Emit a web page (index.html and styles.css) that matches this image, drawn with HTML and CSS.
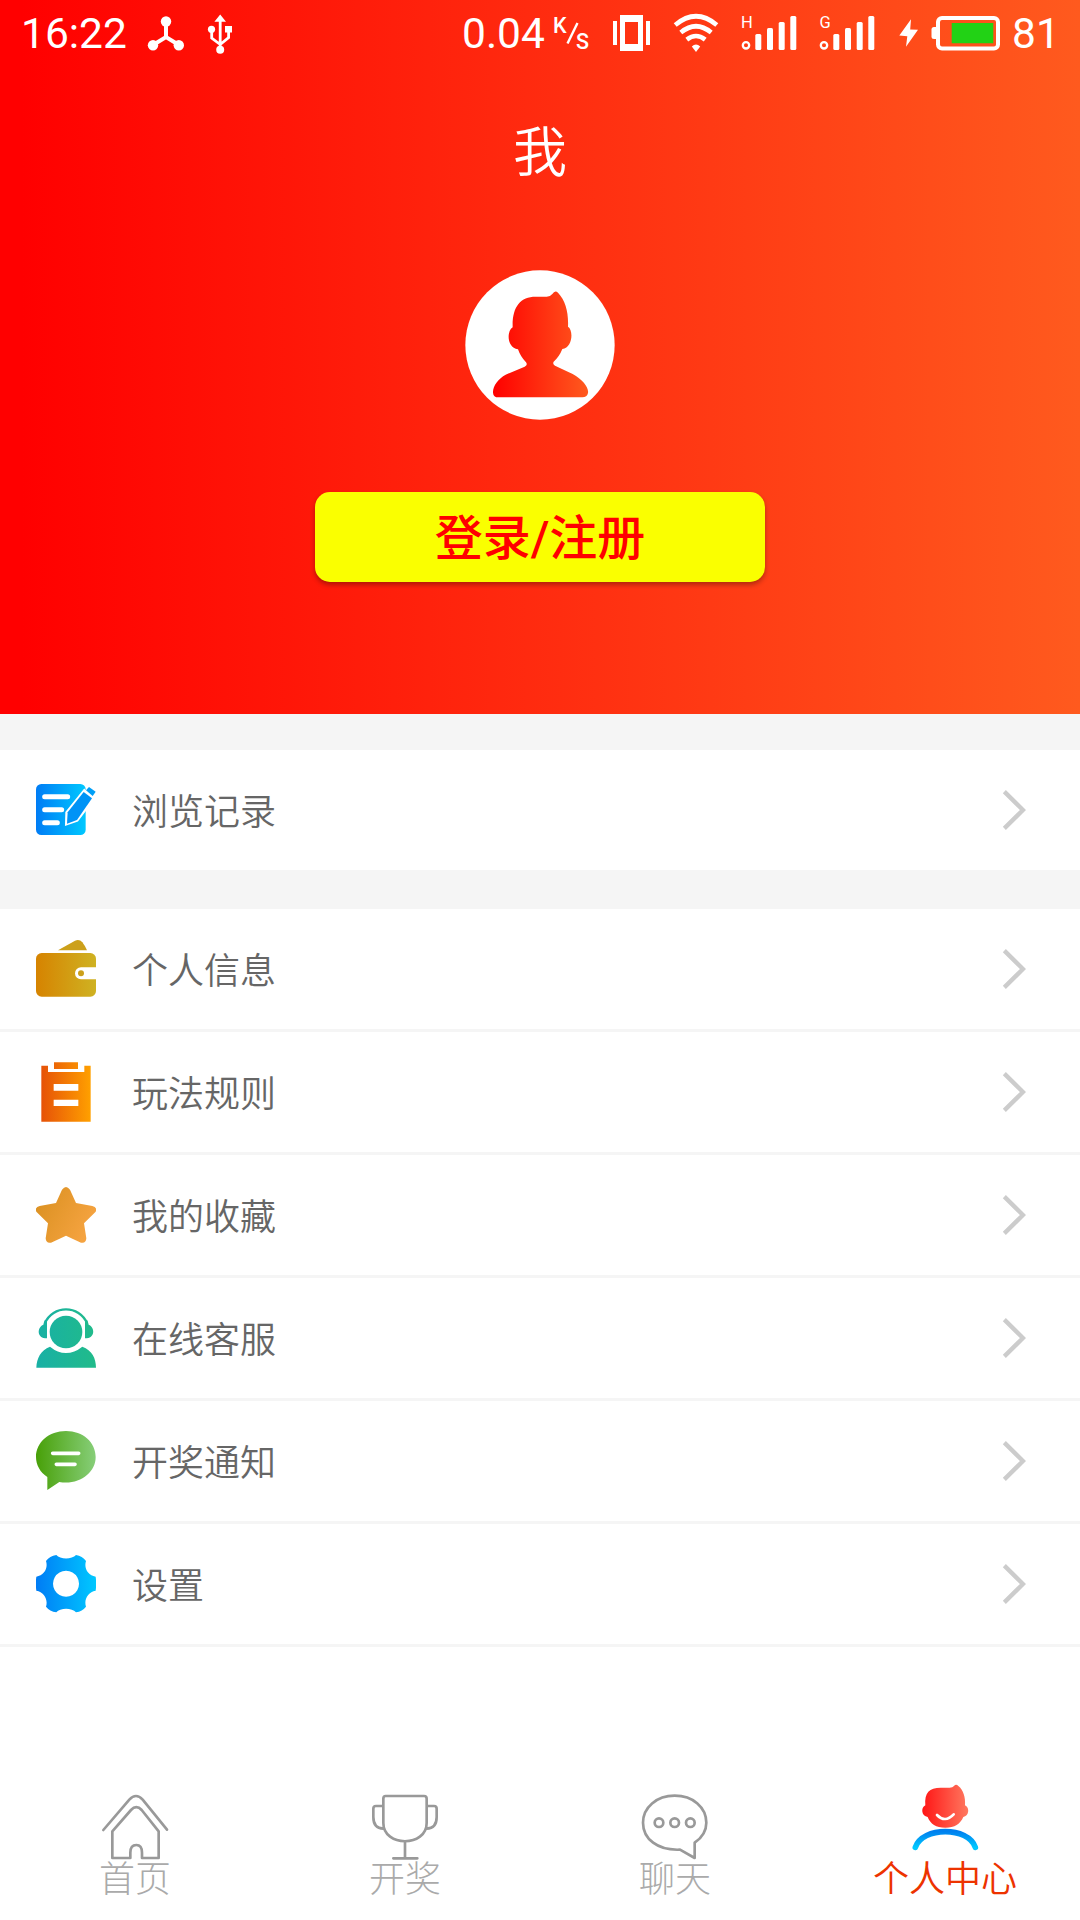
FILE: index.html
```html
<!DOCTYPE html>
<html lang="zh-CN">
<head>
<meta charset="utf-8">
<title>我</title>
<link rel="stylesheet" href="styles.css">
</head>
<body>
<header class="header">
  <div class="status">
    <span class="clock">16:22</span>
    <svg class="status-icon" width="100" height="70" viewBox="140 0 100 70" fill="#fff" stroke="#fff">
      <g stroke="none"><circle cx="166" cy="21.5" r="5.2"/><circle cx="153" cy="45.3" r="5.2"/><circle cx="178.8" cy="45.3" r="5.2"/></g>
      <path d="M166 21v15.500M153 45l13-8 13 8" fill="none" stroke-width="4"/>
      <path d="M220.200 14.500l5.800 7.200h-11.600zM225 26h7v6.500h-7z" stroke="none"/>
      <circle cx="211.500" cy="29.300" r="3.600" stroke="none"/><circle cx="220.200" cy="49.700" r="4" stroke="none"/>
      <path d="M220.200 20v29M211.700 29v9l8.500 6.500M228.600 31v6.500l-8.400 7" fill="none" stroke-width="2.800"/>
    </svg>
    <span class="speed">0.04</span>
    <svg class="status-icon status-right" width="460" height="70" viewBox="550 0 460 70" fill="#fff">
      <text class="unit" x="553" y="32.500">K</text>
      <path d="M577.500 23L567.500 43.500" stroke="#fff" stroke-width="2.400"/>
      <text class="unit" x="576" y="48.500">S</text>
      <path fill-rule="evenodd" d="M620 15h23v36h-23zM625 22v22h13V22zM613 21h4v24h-4zM646 21h4v24h-4z"/>
      <g fill="none" stroke="#fff" stroke-width="4.600">
        <path d="M675.200 25Q696 7.500 716.800 25"/><path d="M680.800 32.500Q696 20 711.200 32.500"/><path d="M686.800 39.600Q696 32.400 705.200 39.600"/>
      </g>
      <path d="M691.800 46.500Q696 42.500 700.200 46.500L696 52z"/>
      <text class="net" x="741" y="28">H</text>
      <circle cx="746" cy="45.300" r="3.200" fill="none" stroke="#fff" stroke-width="2.300"/>
      <rect x="755.300" y="34" width="6" height="16" rx="1.500"/><rect x="767" y="28" width="6" height="22" rx="1.500"/><rect x="778.700" y="22" width="6" height="28" rx="1.500"/><rect x="790.300" y="16" width="6" height="34" rx="1.500"/>
      <text class="net" x="819.500" y="28">G</text>
      <circle cx="824" cy="45.300" r="3.200" fill="none" stroke="#fff" stroke-width="2.300"/>
      <rect x="833.300" y="34" width="6" height="16" rx="1.500"/><rect x="845" y="28" width="6" height="22" rx="1.500"/><rect x="856.700" y="22" width="6" height="28" rx="1.500"/><rect x="868.300" y="16" width="6" height="34" rx="1.500"/>
      <path d="M911 19.300L899.300 35.600l8 .6-1.300 10.600L918 29.700l-7.800-.3z"/>
      <rect x="938" y="18" width="60" height="30.500" rx="4" fill="none" stroke="#fff" stroke-width="4"/>
      <path d="M937 27h-3q-2.500 0-2.500 2.500v7q0 2.500 2.500 2.500h3z"/>
      <path fill="#22d215" d="M951.700 23h41.600v20.300h-41.600z"/>
    </svg>
    <span class="battery">81</span>
  </div>
  <h1 class="title">我</h1>
  <svg class="avatar" viewBox="75 510 450 450">
    <defs><linearGradient id="face"><stop stop-color="#f00"/><stop offset="1" stop-color="#ff5a1e"/></linearGradient></defs>
    <circle cx="300" cy="735" r="224" fill="#fff"/>
    <path fill="url(#face)" d="M218 682C216 622 240 590 287 590H320Q331 590 337 582Q345 569 354 578C377 602 386 638 384 680C401 690 398 743 367 747Q358 770 341 785Q337 793 345 797L398 822C428 838 447 863 444 879Q441 892 427 892H175Q160 892 159 878C158 858 175 836 197 824L254 800Q264 796 258 787Q242 771 234 748C201 744 199 694 218 682Z"/>
  </svg>
  <button class="login">登录/注册</button>
</header>

<main class="menu">
  <section class="group">
    <a class="row">
      <svg class="icon" viewBox="108 240 180 180">
        <defs><linearGradient id="blue" x2="1" y2="0"><stop stop-color="#007cf5"/><stop offset="1" stop-color="#00c8ff"/></linearGradient></defs>
        <rect x="108" y="252" width="149" height="153" rx="16" fill="url(#blue)"/>
        <path d="M134 290h69M134 329h51M134 368h38" stroke="#fff" stroke-width="15" stroke-linecap="round"/>
        <path d="M253 270L283 295L232 362L198 374L199 337Z" fill="#fff" stroke="#fff" stroke-width="6"/>
        <path d="M251 276L276 295L231 360L201 371L203 337Z" fill="#0093f6"/>
        <path d="M258 271L267 261L287 275L278 288Z" fill="#009ff7"/>
      </svg>
      <span class="label">浏览记录</span>
      <svg class="arrow" viewBox="130 270 70 120"><path d="M136 275L192 330L136 385"/></svg>
    </a>
  </section>
  <section class="group lined">
    <a class="row">
      <svg class="icon" viewBox="108 717 180 180">
        <defs><linearGradient id="gold"><stop stop-color="#d68300"/><stop offset="1" stop-color="#cfb222"/></linearGradient></defs>
        <path fill="#cca01a" d="M174 751L225 722Q238 716 247 727Q255 737 261 751Z"/>
        <rect x="108" y="759" width="180" height="131" rx="17" fill="url(#gold)"/>
        <path fill="#fff" d="M288 802H243a18 18 0 0 0 0 36h45z"/><circle cx="243" cy="820" r="9" fill="#cca01a"/>
      </svg>
      <span class="label">个人信息</span>
      <svg class="arrow" viewBox="130 270 70 120"><path d="M136 275L192 330L136 385"/></svg>
    </a>
    <a class="row">
      <svg class="icon" viewBox="108 126 180 180">
        <defs><linearGradient id="orange" gradientUnits="userSpaceOnUse" x1="124" x2="272" y1="0" y2="0"><stop stop-color="#e65208"/><stop offset="1" stop-color="#ffa000"/></linearGradient></defs>
        <path fill="url(#orange)" d="M162 127h72v20h-72zM124 137h20v19h109v-19h19v168H124z"/>
        <path fill="#fff" d="M161 192h74v20h-74zM161 239h74v19h-74z"/>
      </svg>
      <span class="label">玩法规则</span>
      <svg class="arrow" viewBox="130 270 70 120"><path d="M136 275L192 330L136 385"/></svg>
    </a>
    <a class="row">
      <svg class="icon" viewBox="108 495 180 180">
        <defs><linearGradient id="star" y2=".5"><stop stop-color="#d88f1e"/><stop offset="1" stop-color="#f5a340"/></linearGradient></defs>
        <path fill="url(#star)" d="M186 509Q198 493 210 509L228 549L277 558Q293 562 287 575L252 610L259 655Q258 671 243 668L198 647L153 668Q138 671 137 655L144 610L109 575Q103 562 119 558L168 549Z"/>
      </svg>
      <span class="label">我的收藏</span>
      <svg class="arrow" viewBox="130 270 70 120"><path d="M136 275L192 330L136 385"/></svg>
    </a>
    <a class="row">
      <svg class="icon" viewBox="108 84 180 180">
        <defs><linearGradient id="teal" gradientUnits="userSpaceOnUse" x1="108" x2="288" y1="0" y2="0"><stop stop-color="#18b0a5"/><stop offset="1" stop-color="#21bb8a"/></linearGradient></defs>
        <circle cx="198" cy="156" r="49" fill="url(#teal)"/>
        <path fill="none" stroke="url(#teal)" stroke-width="7" d="M134 131C158 74 238 74 262 131"/>
        <path fill="url(#teal)" d="M141 121V175C109 175 111 142 130 134L134 121ZM255 121V175C287 175 285 142 266 134L262 121ZM150 200Q173 219 198 219T247 200C276 211 288 234 288 263H109C110 235 122 210 150 200Z"/>
      </svg>
      <span class="label">在线客服</span>
      <svg class="arrow" viewBox="130 270 70 120"><path d="M136 275L192 330L136 385"/></svg>
    </a>
    <a class="row">
      <svg class="icon" viewBox="108 453 180 180">
        <defs><linearGradient id="green"><stop stop-color="#48a008"/><stop offset="1" stop-color="#87ce79"/></linearGradient></defs>
        <path fill="url(#green)" d="M198 453C249 453 287 487 287 531C287 579 237 616 178 606L142 630V591C120 577 108 554 108 531C108 487 147 453 198 453Z"/>
        <path stroke="#fff" stroke-width="11" stroke-linecap="round" d="M158 520h78M169 553h56"/>
      </svg>
      <span class="label">开奖通知</span>
      <svg class="arrow" viewBox="130 270 70 120"><path d="M136 275L192 330L136 385"/></svg>
    </a>
    <a class="row">
      <svg class="icon" viewBox="108 822 180 180">
        <path fill="url(#blue)" fill-rule="evenodd" d="M169 825C180 839 216 839 228 825Q247 828 258 843C251 865 264 886 287 890Q290 911 287 932C264 936 251 959 258 980Q247 994 228 997C216 983 180 983 169 997Q149 994 138 980C145 959 132 936 109 932Q106 911 109 890C132 886 145 865 138 843Q149 828 169 825ZM198 872a39 39 0 1 0 .1 0z"/>
      </svg>
      <span class="label">设置</span>
      <svg class="arrow" viewBox="130 270 70 120"><path d="M136 275L192 330L136 385"/></svg>
    </a>
  </section>
</main>

<nav class="tabs">
  <a class="tab">
    <svg class="tab-icon" viewBox="120 62 210 210"><path d="M130 179L208 88Q228 66 248 88L321 178M157 183L213 119Q229 102 245 119L296 183V263H246V247Q246 224 229 224Q211 224 211 247V263H157Z"/></svg>
    <span class="tab-label">首页</span>
  </a>
  <a class="tab">
    <svg class="tab-icon" viewBox="930 62 210 210"><path d="M977 77H1092Q1100 77 1100 85V158C1100 231 970 231 970 158V85Q970 77 977 77ZM970 107H948Q940 107 940 115V140Q940 174 970 175M1100 107H1122Q1130 107 1130 115V140Q1130 174 1100 175M1035 213V264M1000 264H1072"/></svg>
    <span class="tab-label">开奖</span>
  </a>
  <a class="tab">
    <svg class="tab-icon" viewBox="120 62 210 210"><path d="M224 76C279 76 319 111 319 157Q319 193 284 217V263L240 238C173 241 129 206 129 157C129 111 170 76 224 76Z"/><circle cx="177" cy="157" r="13"/><circle cx="224" cy="157" r="13"/><circle cx="271" cy="157" r="13"/></svg>
    <span class="tab-label">聊天</span>
  </a>
  <a class="tab active">
    <svg class="tab-icon" viewBox="930 62 210 210">
      <defs><linearGradient id="head"><stop stop-color="#ff1515"/><stop offset="1" stop-color="#ff7960"/></linearGradient><linearGradient id="body" x2="0" y2="1"><stop stop-color="#0080ef"/><stop offset="1" stop-color="#00c8ff"/></linearGradient></defs>
      <path class="solid" fill="url(#head)" d="M976 105C973 67 988 52 1022 52H1049Q1058 52 1062 47Q1068 39 1075 47C1090 58 1097 82 1095 105C1111 113 1106 138 1090 140C1081 161 1064 172 1036 172C1008 172 991 161 983 140C965 138 961 113 976 105Z"/>
      <path class="smile" d="M1011 134Q1035 159 1061 132"/>
      <path class="shoulders" d="M946 231C967 168 1105 168 1126 231"/>
    </svg>
    <span class="tab-label">个人中心</span>
  </a>
</nav>
</body>
</html>
```

FILE: styles.css
```css
* {
  box-sizing: border-box;
}

body {
  display: flex;
  flex-direction: column;
  width: 1080px;
  height: 1920px;
  margin: 0;
  overflow: hidden;
  background: #fff;
  font-family: "Noto Sans CJK SC", sans-serif;
  font-weight: 350;
}

.header {
  display: flex;
  flex-direction: column;
  align-items: center;
  height: 714px;
  background: linear-gradient(90deg, #f00 2%, #ff2d10 52%, #ff5a1e 100%);
  color: #fff;
}

/* Status bar */
.status {
  display: flex;
  width: 100%;
  height: 70px;
  padding-left: 21px;
  font: 400 42.500px/68px Roboto, sans-serif;
}

.clock {
  width: 119px;
}

.status-icon {
  flex: none;
}

.speed {
  width: 88px;
  margin-left: 222px;
}

.unit {
  font: 500 21.500px Roboto, sans-serif;
}

.net {
  font: 400 16.500px Roboto, sans-serif;
}

.battery {
  margin-left: 2px;
}

/* Profile */
.title {
  height: 80px;
  margin: 39px 0 81px;
  font-size: 54px;
  font-weight: 350;
  line-height: 80px;
}

.avatar {
  width: 150px;
  height: 150px;
}

.login {
  width: 450px;
  height: 90px;
  margin-top: 72px;
  padding: 3px 0 0;
  border: 0;
  border-radius: 15px;
  background: #faff00;
  box-shadow: 0 3px 5px rgba(0, 0, 0, 0.3);
  color: #f00;
  font-family: Roboto, "Noto Sans CJK SC", sans-serif;
  font-size: 48px;
  font-weight: 500;
  line-height: 87px;
}

/* Menu */
.menu {
  display: flex;
  flex-direction: column;
  gap: 39px;
  padding-top: 36px;
  background: #f5f5f5;
}

.group {
  background: #fff;
}

.row {
  display: flex;
  align-items: center;
  height: 120px;
  padding: 0 54px 0 36px;
}

.lined .row {
  height: 123px;
  border-bottom: 3px solid #f5f5f5;
}

.icon {
  width: 60px;
  height: 60px;
}

.label {
  flex: 1;
  margin-left: 36px;
  padding-bottom: 3px;
  color: #666;
  font-size: 36px;
}

.arrow {
  width: 24px;
  height: 40px;
  fill: none;
  stroke: #ccc;
  stroke-width: 13;
}

/* Bottom tabs */
.tabs {
  display: grid;
  grid-template-columns: repeat(4, 1fr);
  margin-top: auto;
  height: 129px;
}

.tab {
  display: flex;
  flex-direction: column;
  align-items: center;
  color: #aaa;
  font-weight: 300;
}

.tab-icon {
  width: 70px;
  height: 70px;
  overflow: visible;
  fill: none;
  stroke: #999;
  stroke-width: 8;
  stroke-linecap: round;
  stroke-linejoin: round;
}

.tab-label {
  margin-top: -3px;
  font-size: 36px;
  line-height: 36px;
}

.active {
  color: #ed3300;
  font-weight: 350;
}

.solid {
  stroke: none;
}

.smile {
  stroke: #fff;
}

.shoulders {
  stroke: url(#body);
  stroke-width: 17;
}
```
